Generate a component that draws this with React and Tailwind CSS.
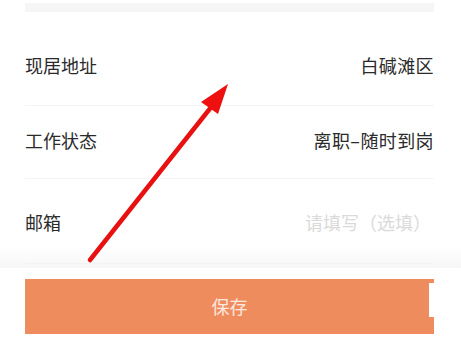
export default function App() {
    const rows = [
        { label: "现居地址", value: "白碱滩区", cls: "h-[76px] pb-[6px]" },
        { label: "工作状态", value: "离职–随时到岗", cls: "h-[73px] pb-[5px]" },
        { label: "邮箱", value: "请填写（选填）", cls: "h-[85px] pt-[2px]", placeholder: true },
    ];

    return (
        <div
            className="relative w-[461px] h-[348px] bg-white overflow-hidden"
            style={{ fontFamily: '"Noto Sans CJK SC", "Noto Sans", sans-serif' }}
        >
            <div className="pl-[25px] pr-[27px] pt-[3px]">
                <div className="h-[9px] bg-[#f6f6f6]"></div>
                <div className="h-[18px]"></div>

                {rows.map((row, i) => (
                    <div key={i} className={`${row.cls} flex items-center justify-between border-b border-[#f4f4f4] text-[18px] leading-none`}>
                        <span className="text-[#2a2a2a]">{row.label}</span>
                        <span className={row.placeholder ? "text-[#dadada] pr-[3px]" : "text-[#2a2a2a] tracking-[0.4px]"}>{row.value}</span>
                    </div>
                ))}
            </div>

            {/* bottom bar */}
            <div className="absolute left-0 right-0 bottom-0 h-[80px] bg-white">
                <div className="absolute left-0 right-0 -top-[22px] h-[22px] bg-gradient-to-b from-white/0 to-[#f3f3f3]/70"></div>
                <div className="relative ml-[25px] mr-[27px] mt-[11px] h-[55px] bg-[#ee8c5d] flex items-center justify-center">
                    <span className="text-[18px] text-white/80">保存</span>
                    <div className="absolute right-0 top-[4px] w-[5px] h-[34px] bg-white"></div>
                </div>
            </div>

            {/* annotation arrow */}
            <svg className="absolute inset-0 pointer-events-none" width="461" height="348" viewBox="0 0 461 348">
                <line x1="90" y1="260" x2="212" y2="106" stroke="#e81010" strokeWidth="4.5" strokeLinecap="round" />
                <polygon points="228,84 201,102 218,114" fill="#ee0f0f" />
            </svg>
        </div>
    );
}
